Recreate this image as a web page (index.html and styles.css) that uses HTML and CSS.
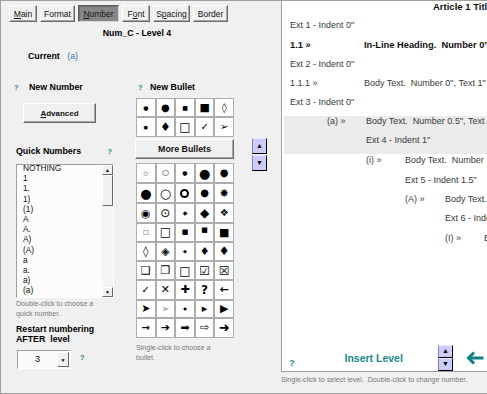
FILE: index.html
```html
<!DOCTYPE html>
<html lang="en">
<head>
    <meta charset="UTF-8">
    <meta name="viewport" content="width=device-width, initial-scale=1.0">
    <title>Numbering - Level 4</title>
    <link rel="stylesheet" href="styles.css">
</head>
<body>
    <div class="window">
        <div class="left">
            <div class="tabs">
                <button class="tab tab-main"><u>M</u>ain</button>
                <button class="tab tab-format">Format</button>
                <button class="tab tab-number active"><u>N</u>umber</button>
                <button class="tab tab-font">F<u>o</u>nt</button>
                <button class="tab tab-spacing">S<u>p</u>acing</button>
                <button class="tab tab-border">Border</button>
            </div>
            <div class="level-title">Num_C - Level 4</div>
            <div class="current">Current <span class="current-value">(a)</span></div>

            <div class="columns">
                <div class="col-number">
                    <div class="label"><span class="help">?</span>New Number</div>
                    <button class="button advanced"><u>A</u>dvanced</button>
                    <div class="label quick">Quick Numbers <span class="help">?</span></div>
                    <div class="listbox">
                        <ul class="list-items">
                            <li>NOTHING</li>
                            <li>1</li>
                            <li>1.</li>
                            <li>1)</li>
                            <li>(1)</li>
                            <li>A</li>
                            <li>A.</li>
                            <li>A)</li>
                            <li>(A)</li>
                            <li>a</li>
                            <li>a.</li>
                            <li>a)</li>
                            <li>(a)</li>
                        </ul>
                        <div class="scrollbar">
                            <div class="scroll-btn">&#9650;</div>
                            <div class="scroll-thumb"></div>
                            <div class="scroll-track"></div>
                            <div class="scroll-btn">&#9660;</div>
                        </div>
                    </div>
                    <p class="hint">Double-click to choose a<br>quick number.</p>
                    <div class="label restart">Restart numbering<br>AFTER&nbsp; level</div>
                    <div class="restart-row">
                        <div class="combo">
                            <span class="combo-value">3</span>
                            <span class="combo-btn">&#9660;</span>
                        </div>
                        <span class="help">?</span>
                    </div>
                </div>

                <div class="col-bullet">
                    <div class="label"><span class="help">?</span>New Bullet</div>
                    <div class="bullet-grid rows-2">
                        <span class="b s6">&#9679;</span>
                        <span class="b s10">&#9679;</span>
                        <span class="b s6">&#9632;</span>
                        <span class="b s11">&#9632;</span>
                        <span class="b s10">&#9674;</span>

                        <span class="b s5">&#9679;</span>
                        <span class="b s12">&#9830;</span>
                        <span class="b s12">&#9633;</span>
                        <span class="b s10">&#10003;</span>
                        <span class="b s10">&#10146;</span>
                    </div>
                    <button class="button more">More Bullets</button>
                    <div class="bullet-grid rows-9">
                        <span class="b s5">&#9675;</span>
                        <span class="b s8">&#9675;</span>
                        <span class="b s6">&#9679;</span>
                        <span class="b s13">&#9679;</span>
                        <span class="b s10">&#9679;</span>

                        <span class="b s13">&#9679;</span>
                        <span class="b s13">&#9675;</span>
                        <span class="b"><span class="ring"></span></span>
                        <span class="b s10">&#9679;</span>
                        <span class="b s11">&#10040;</span>

                        <span class="b s11">&#9673;</span>
                        <span class="b s12">&#8857;</span>
                        <span class="b s6">&#9670;</span>
                        <span class="b s12">&#9670;</span>
                        <span class="b s10">&#10070;</span>

                        <span class="b s6">&#9633;</span>
                        <span class="b s12">&#9633;</span>
                        <span class="b s7">&#9632;</span>
                        <span class="b s7 raised">&#9632;</span>
                        <span class="b s11">&#9632;</span>

                        <span class="b s11">&#9674;</span>
                        <span class="b s11">&#9672;</span>
                        <span class="b s5">&#9670;</span>
                        <span class="b s11">&#9830;</span>
                        <span class="b s12">&#9830;</span>

                        <span class="b s11">&#10065;</span>
                        <span class="b s11">&#10066;</span>
                        <span class="b s12">&#9633;</span>
                        <span class="b s12">&#9745;</span>
                        <span class="b s12">&#9746;</span>

                        <span class="b s10">&#10003;</span>
                        <span class="b s11 heavy">&#10005;</span>
                        <span class="b s11">&#10010;</span>
                        <span class="b s12 heavy">?</span>
                        <span class="b s11 heavy">&#8592;</span>

                        <span class="b s11">&#10148;</span>
                        <span class="b s10 faint">&#10146;</span>
                        <span class="b s4">&#9679;</span>
                        <span class="b s11">&#9656;</span>
                        <span class="b s11">&#9654;</span>

                        <span class="b s10 heavy">&#8594;</span>
                        <span class="b s11">&#10132;</span>
                        <span class="b s11">&#10145;</span>
                        <span class="b s11">&#8680;</span>
                        <span class="b s13">&#10140;</span>
                    </div>
                    <p class="hint">Single-click to choose a<br>bullet.</p>
                </div>

                <div class="col-spin">
                    <button class="spin">&#9650;</button>
                    <button class="spin">&#9660;</button>
                </div>
            </div>
        </div>

        <div class="right">
            <div class="preview">
                <div class="pv-title">Article 1 Title</div>
                <div class="pv-row ext-0">Ext 1 - Indent 0"</div>
                <div class="pv-row lvl-1 strong"><span class="pv-num">1.1 &raquo;</span>In-Line Heading.&nbsp; Number 0", Text 1"</div>
                <div class="pv-row ext-0">Ext 2 - Indent 0"</div>
                <div class="pv-row lvl-1"><span class="pv-num">1.1.1 &raquo;</span>Body Text.&nbsp; Number 0", Text 1"</div>
                <div class="pv-row ext-0">Ext 3 - Indent 0"</div>
                <div class="pv-selected">
                    <div class="pv-row lvl-3"><span class="pv-num">(a) &raquo;</span>Body Text.&nbsp; Number 0.5", Text 1"</div>
                    <div class="pv-row ext-4">Ext 4 - Indent 1"</div>
                </div>
                <div class="pv-row lvl-4"><span class="pv-num">(i) &raquo;</span>Body Text.&nbsp; Number 1", Text 1.5"</div>
                <div class="pv-row ext-5">Ext 5 - Indent 1.5"</div>
                <div class="pv-row lvl-5"><span class="pv-num">(A) &raquo;</span>Body Text.&nbsp; Number 1.5", Text 2"</div>
                <div class="pv-row ext-6">Ext 6 - Indent 2"</div>
                <div class="pv-row lvl-6"><span class="pv-num">(I) &raquo;</span>Body Text.&nbsp; Number 2", Text 2.5"</div>

                <div class="pv-footer">
                    <span class="help big">?</span>
                    <span class="insert-level">Insert Level</span>
                    <div class="pv-spin">
                        <button class="spin">&#9650;</button>
                        <button class="spin">&#9660;</button>
                    </div>
                    <svg class="back-arrow" width="18" height="14" viewBox="0 0 18 14">
                        <path d="M8 1.5 L2.5 7 L8 12.5" fill="none" stroke="#0f8080" stroke-width="3"/>
                        <path d="M3 7 H17.5" stroke="#0f8080" stroke-width="3"/>
                    </svg>
                </div>
            </div>
            <p class="hint bottom-hint">Single-click to select level.&nbsp; Double-click to change number.</p>
        </div>
    </div>
</body>
</html>
```

FILE: styles.css
```css
* {
    box-sizing: border-box;
}

body {
    margin: 0;
    background-color: #f0f0f0;
    font-family: "Liberation Sans", Arial, sans-serif;
    color: #000;
    overflow: hidden;
}

p {
    margin: 0;
}

.window {
    width: 487px;
    height: 394px;
    display: flex;
    border: 1px solid #a0a0a0;
    border-right: none;
    background-color: #f0f0f0;
}

.left {
    width: 280px;
    flex: none;
}

.right {
    flex: 1;
    min-width: 0;
    display: flex;
    flex-direction: column;
}

/* tabs */

.tabs {
    display: flex;
    gap: 3px;
    margin: 4px 0 0 8px;
}

.tab {
    height: 17px;
    padding: 0;
    font-family: "Liberation Sans", Arial, sans-serif;
    font-size: 8.5px;
    color: #111;
    background-color: #f0f0f0;
    border: 1px solid;
    border-color: #fff #6a6a6a #6a6a6a #fff;
    box-shadow: inset -1px -1px 0 #a8a8a8;
}

.tab-main { width: 28px; }
.tab-format { width: 35px; }
.tab-number { width: 41px; }
.tab-font { width: 28px; }
.tab-spacing { width: 37px; }
.tab-border { width: 35px; }

.tab.active {
    background-color: #878787;
    color: #1a1a1a;
    border-color: #5c5c5c #d8d8d8 #d8d8d8 #5c5c5c;
    box-shadow: inset 1px 1px 0 #6e6e6e;
}

.level-title {
    width: 272px;
    margin-top: 6px;
    text-align: center;
    font-size: 8.8px;
    font-weight: bold;
    line-height: 10px;
}

.current {
    margin-top: 13px;
    padding-left: 27px;
    font-size: 8.8px;
    font-weight: bold;
    line-height: 10px;
}

.current-value {
    margin-left: 5px;
    font-weight: normal;
    color: #3b78b0;
}

/* columns */

.columns {
    display: flex;
    margin-top: 21px;
}

.label {
    font-size: 8.8px;
    font-weight: bold;
    line-height: 10px;
    white-space: nowrap;
}

.help {
    display: inline-block;
    color: #178a8a;
    font-size: 7.5px;
    font-weight: bold;
}

.col-number {
    width: 100px;
    margin-left: 12px;
}

.col-number > .label:first-child .help {
    width: 16px;
    padding-left: 1px;
}

.button {
    display: block;
    padding: 0;
    font-family: "Liberation Sans", Arial, sans-serif;
    font-weight: bold;
    color: #111;
    background-color: #f0f0f0;
    border: 1px solid;
    border-color: #fff #6a6a6a #6a6a6a #fff;
    box-shadow: inset -1px -1px 0 #a8a8a8;
}

.advanced {
    width: 73px;
    height: 20px;
    margin: 10px 0 0 10px;
    font-size: 8px;
}

.quick {
    margin: 23px 0 0 3px;
}

.quick .help {
    margin-left: 24px;
}

.listbox {
    display: flex;
    width: 98px;
    height: 134px;
    margin: 7px 0 0 3px;
    background-color: #fcfcfc;
    border: 1px solid;
    border-color: #a0a0a0 #fff #fff #a0a0a0;
}

.list-items {
    flex: 1;
    margin: 0;
    padding: 0 0 0 6px;
    list-style: none;
    font-size: 8.3px;
    line-height: 10.2px;
    color: #111;
}

.list-items li:first-child {
    margin-top: -2px;
}

.scrollbar {
    width: 11px;
    display: flex;
    flex-direction: column;
    background-color: #f4f4f4;
}

.scroll-btn,
.scroll-thumb {
    background-color: #f0f0f0;
    border: 1px solid;
    border-color: #fff #6a6a6a #6a6a6a #fff;
}

.scroll-btn {
    height: 10px;
    font-size: 5px;
    line-height: 8px;
    text-align: center;
}

.scroll-thumb {
    height: 31px;
}

.scroll-track {
    flex: 1;
}

.hint {
    font-size: 7.1px;
    line-height: 10px;
    color: #787878;
}

.col-number .hint {
    margin: 1px 0 0 3px;
}

.restart {
    margin: 6px 0 0 3px;
    line-height: 9.5px;
}

.restart-row {
    display: flex;
    align-items: flex-start;
    margin: 6px 0 0 4px;
}

.combo {
    display: flex;
    width: 54px;
    height: 19px;
    background-color: #fafafa;
    border: 1px solid;
    border-color: #a0a0a0 #fff #fff #a0a0a0;
}

.combo-value {
    flex: 1;
    text-align: center;
    font-size: 9px;
    line-height: 17px;
}

.combo-btn {
    width: 12px;
    margin: 1px 1px 1px 0;
    font-size: 5px;
    line-height: 15px;
    text-align: center;
    background-color: #f0f0f0;
    border: 1px solid;
    border-color: #fff #6a6a6a #6a6a6a #fff;
}

.restart-row .help {
    margin: 3px 0 0 9px;
}

/* bullets */

.col-bullet {
    width: 99px;
    margin-left: 22px;
}

.col-bullet > .label .help {
    width: 15px;
    padding-left: 3px;
}

.bullet-grid {
    display: grid;
    grid-template-columns: repeat(5, 1fr);
    gap: 2px;
    width: 98px;
    margin-left: 1px;
    padding: 1px;
    background-color: #adadad;
}

.bullet-grid.rows-2 {
    height: 39px;
    margin-top: 5px;
}

.bullet-grid.rows-9 {
    height: 175px;
    margin-top: 4px;
}

.b {
    display: flex;
    align-items: center;
    justify-content: center;
    background-color: #fff;
    font-family: "DejaVu Sans", sans-serif;
    line-height: 1;
    color: #000;
}

.s4 { font-size: 4px; }
.s5 { font-size: 5px; }
.s6 { font-size: 6px; }
.s7 { font-size: 7px; }
.s8 { font-size: 8px; }
.s10 { font-size: 10px; }
.s11 { font-size: 11px; }
.s12 { font-size: 12px; }
.s13 { font-size: 13px; }

.b.heavy {
    font-weight: bold;
}

.b.faint {
    color: #8a8a8a;
}

.b.raised {
    padding-bottom: 3px;
}

.ring {
    width: 9px;
    height: 9px;
    border: 2.5px solid #000;
    border-radius: 50%;
}

.more {
    width: 99px;
    height: 20px;
    margin-top: 2px;
    font-size: 8.8px;
}

.col-bullet .hint {
    margin-top: 5px;
    padding-left: 1px;
}

/* spin buttons */

.col-spin {
    display: flex;
    flex-direction: column;
    gap: 1px;
    margin: 56px 0 0 18px;
}

.spin {
    display: block;
    width: 15px;
    height: 16px;
    padding: 0;
    font-size: 7px;
    line-height: 12px;
    color: #000;
    background-color: #ccccfa;
    border: 1px solid;
    border-color: #e8e8ff #000 #000 #8080c0;
}

/* preview */

.preview {
    height: 371px;
    display: flex;
    flex-direction: column;
    overflow: hidden;
    background-color: #fff;
    border-left: 1px solid #a0a0a0;
    border-bottom: 1px solid #a0a0a0;
    font-size: 9px;
    color: #3a3a3a;
    white-space: nowrap;
}

.pv-title {
    flex: none;
    height: 15.3px;
    padding-left: 151px;
    font-size: 9.5px;
    font-weight: bold;
    line-height: 11px;
    color: #111;
}

.pv-row {
    flex: none;
    height: 19.3px;
    line-height: 19.3px;
    padding-left: 8px;
}

.pv-row.strong {
    font-size: 9.3px;
    font-weight: bold;
    color: #111;
}

.pv-num {
    display: inline-block;
    width: 39px;
}

.lvl-1 .pv-num { width: 74px; }
.lvl-3 { padding-left: 45px; }
.lvl-4 { padding-left: 84px; }
.lvl-5 { padding-left: 123px; }
.lvl-5 .pv-num { width: 40px; }
.lvl-6 { padding-left: 163px; }

.ext-4 { padding-left: 84px; }
.ext-5 { padding-left: 123px; }
.ext-6 { padding-left: 163px; }

.pv-selected {
    flex: none;
    margin: 3px 0 -3px 2px;
    background-color: #ebebeb;
}

.pv-selected .pv-row {
    line-height: 11.8px;
}

.pv-selected .lvl-3 { padding-left: 43px; }
.pv-selected .ext-4 { padding-left: 82px; }

.pv-footer {
    display: flex;
    align-items: center;
    height: 27px;
    margin-top: auto;
}

.help.big {
    align-self: flex-end;
    margin: 0 0 3px 7px;
    font-size: 9px;
}

.insert-level {
    margin-left: 50px;
    font-size: 10.5px;
    font-weight: bold;
    color: #178a8a;
}

.pv-spin {
    display: flex;
    flex-direction: column;
    margin-left: 35px;
}

.pv-spin .spin {
    height: 13px;
    line-height: 10px;
}

.back-arrow {
    margin-left: 13px;
}

.bottom-hint {
    margin-top: 3px;
    padding-left: 0;
}
```
